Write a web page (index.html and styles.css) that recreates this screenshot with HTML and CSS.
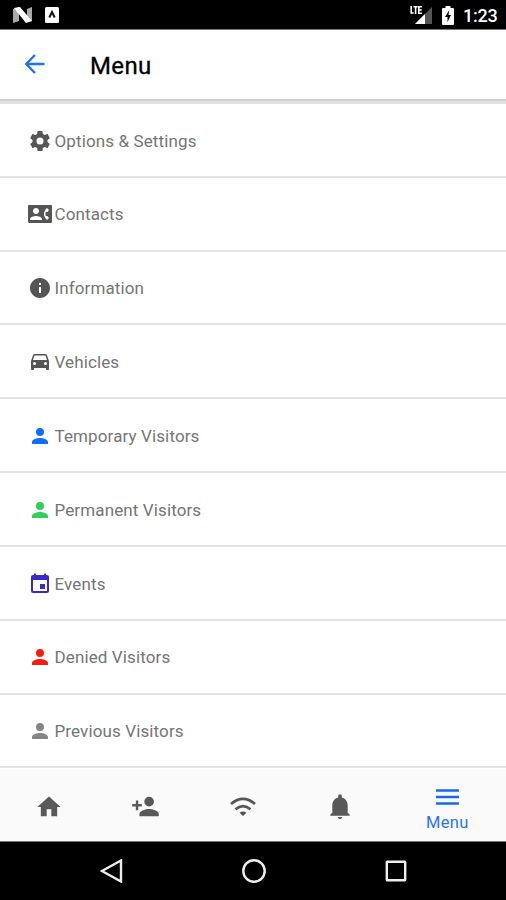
FILE: index.html
```html
<!DOCTYPE html>
<html lang="en">
<head>
<meta charset="utf-8">
<title>Menu</title>
<link rel="stylesheet" href="styles.css">
</head>
<body>
<svg class="defs" aria-hidden="true">
  <symbol id="person" viewBox="0 0 24 24"><path d="M12 12a4 4 0 1 0 0-8 4 4 0 0 0 0 8zm0 2c-2.670 0-8 1.340-8 4v2h16v-2c0-2.660-5.330-4-8-4z"/></symbol>
</svg>
<div class="status">
  <svg class="status-n" viewBox="0 0 20 16"><path fill="#aaa" d="M0 2l6-2v14l-6 2zM14 2l5-2v14l-5 1z"/><path fill="#fff" d="M1 1l6-1 12 14-6 2z"/></svg>
  <svg class="status-a" viewBox="0 0 14 16"><rect width="14" height="16" rx="1.5" fill="#fff"/><path d="M4.300 10.500L7 5l2.700 5.500" fill="none" stroke="#111" stroke-width="2"/></svg>
  <span class="spacer"></span>
  <svg class="status-signal" viewBox="0 0 23 20"><path fill="#555" d="M22 2v17H5z"/><path fill="#fff" d="M15 9v10H5z"/><path fill="none" stroke="#fff" stroke-width="1.600" d="M1.200 1v7h2.500M3.500 1.700h4.200M5.600 1.700V9M12 1.700H8.800v6.600H12M9 5h2.800"/></svg>
  <svg class="status-battery" viewBox="0 0 12 19"><path fill="#fff" d="M3.500 0h5v2H11a1 1 0 0 1 1 1v15a1 1 0 0 1-1 1H1a1 1 0 0 1-1-1V3a1 1 0 0 1 1-1h2.500z"/><path d="M7.300 4L3 11h2.500v5L9 9H6.500z"/></svg>
  <span class="clock">1:23</span>
</div>
<header class="header">
  <svg class="back" viewBox="0 0 20 20"><path d="M19.500 10H1.500M10 1L1.200 10l8.800 9"/></svg>
  <h1>Menu</h1>
</header>
<ul class="list">
  <li><svg class="icon" viewBox="0 0 24 24"><path d="M19.430 12.980c.04-.32.07-.64.07-.98s-.03-.66-.07-.98l2.110-1.650c.19-.15.24-.42.12-.64l-2-3.460c-.12-.22-.39-.3-.61-.22l-2.490 1c-.52-.4-1.080-.73-1.690-.98l-.38-2.650A.488.488 0 0 0 14 2h-4c-.25 0-.46.18-.49.42l-.38 2.650c-.61.25-1.170.59-1.690.98l-2.490-1c-.23-.09-.49 0-.61.22l-2 3.460c-.13.22-.07.49.12.64l2.110 1.650c-.04.32-.07.65-.07.98s.03.66.07.98l-2.110 1.650c-.19.15-.24.42-.12.64l2 3.460c.12.22.39.3.61.22l2.490-1c.52.4 1.080.73 1.690.98l.38 2.650c.03.24.24.42.49.42h4c.25 0 .46-.18.49-.42l.38-2.650c.61-.25 1.170-.59 1.690-.98l2.490 1c.23.09.49 0 .61-.22l2-3.460c.12-.22.07-.49-.12-.64l-2.110-1.650zM12 15.500a3.500 3.500 0 1 1 0-7 3.500 3.500 0 0 1 0 7z"/></svg><span>Options &amp; Settings</span></li>
  <li><svg class="icon" viewBox="0 0 24 24"><path d="M22.800 3H1.200C.5 3 0 3.500 0 4.200v15.600c0 .7.500 1.200 1.200 1.200h21.600c.7 0 1.200-.5 1.200-1.200V4.200c0-.7-.5-1.200-1.200-1.200zM8 6c1.660 0 3 1.340 3 3s-1.340 3-3 3-3-1.340-3-3 1.340-3 3-3zm6 12H2v-1c0-2 4-3.100 6-3.100s6 1.100 6 3.100v1zm3.850-4h1.640L21 16l-1.990 1.990A7.512 7.512 0 0 1 16.280 14c-.18-.64-.28-1.310-.28-2s.1-1.360.28-2a7.474 7.474 0 0 1 2.730-3.990L21 8l-1.510 2h-1.640c-.22.63-.35 1.300-.35 2s.13 1.370.35 2z"/></svg><span>Contacts</span></li>
  <li><svg class="icon" viewBox="0 0 24 24"><path d="M12 2C6.480 2 2 6.480 2 12s4.480 10 10 10 10-4.480 10-10S17.520 2 12 2zm1 15h-2v-6h2v6zm0-8h-2V7h2v2z"/></svg><span>Information</span></li>
  <li><svg class="icon" viewBox="0 0 24 24"><path d="M18.920 5.010C18.720 4.420 18.160 4 17.500 4h-11c-.66 0-1.210.42-1.420 1.010L3 11v8c0 .55.45 1 1 1h1c.55 0 1-.45 1-1v-1h12v1c0 .55.45 1 1 1h1c.55 0 1-.45 1-1v-8l-2.080-5.990zM6.500 15a1.500 1.500 0 1 1 0-3 1.500 1.500 0 0 1 0 3zm11 0a1.500 1.500 0 1 1 0-3 1.500 1.500 0 0 1 0 3zM5 10l1.500-4.500h11L19 10H5z"/></svg><span>Vehicles</span></li>
  <li><svg class="icon blue"><use href="#person"/></svg><span>Temporary Visitors</span></li>
  <li><svg class="icon green"><use href="#person"/></svg><span>Permanent Visitors</span></li>
  <li><svg class="icon indigo" viewBox="0 0 24 24"><path d="M17 12h-5v5h5v-5zM16 1.500V3H8V1.500H6V3H5c-1.110 0-1.990.9-1.990 2L3 19a2 2 0 0 0 2 2h14c1.100 0 2-.9 2-2V5c0-1.100-.9-2-2-2h-1V1.500h-2zM19 19H5V8h14v11z"/></svg><span>Events</span></li>
  <li><svg class="icon red"><use href="#person"/></svg><span>Denied Visitors</span></li>
  <li><svg class="icon grey"><use href="#person"/></svg><span>Previous Visitors</span></li>
</ul>
<nav class="tabs">
  <div class="tab"><svg class="home" viewBox="0 0 24 24"><path d="M10 20v-6h4v6h5v-8h3L12 3 2 12h3v8z"/></svg></div>
  <div class="tab"><svg class="add" viewBox="0 0 24 24"><path d="M15 12a4 4 0 1 0 0-8 4 4 0 0 0 0 8zm-9-2V7H4v3H1v2h3v3h2v-3h3v-2H6zm9 4c-2.670 0-8 1.340-8 4v2h16v-2c0-2.660-5.330-4-8-4z"/></svg></div>
  <div class="tab"><svg class="wifi" viewBox="0 0 26 19"><path d="M1 7Q13-3.200 25 7M5.500 12.300Q13 6 20.500 12.300"/><path class="dot" d="M9.500 15.800q3.500-2.800 7 0L13 19z"/></svg></div>
  <div class="tab"><svg class="bell" viewBox="0 0 20 25"><path d="M10 25c1.300 0 2.200-.9 2.200-2.100H7.800C7.800 24.100 8.700 25 10 25zM17.700 18.700v-7.200c0-3.900-2.300-7-5.900-7.900V2a1.800 1.800 0 0 0-3.600 0v1.600c-3.600.9-5.900 4-5.900 7.900v7.200L.3 20.500v1.300h19.400v-1.300z"/></svg></div>
  <div class="tab active"><svg class="burger" viewBox="0 0 23 16"><path d="M0 1.500h23M0 8h23M0 14.500h23"/></svg><span>Menu</span></div>
</nav>
<div class="system">
  <svg viewBox="0 0 24 24"><path d="M21 1.500v21L2 12z"/></svg>
  <svg viewBox="0 0 24 24"><circle cx="12" cy="12" r="10.700"/></svg>
  <svg viewBox="0 0 24 24"><rect x="2.800" y="2.800" width="18.400" height="18.400" rx=".5"/></svg>
</div>
</body>
</html>
```
FILE: styles.css
```css
* { box-sizing: border-box; }
body {
  margin: 0;
  width: 506px;
  height: 900px;
  display: flex;
  flex-direction: column;
  overflow: hidden;
  background: #fff;
  font-family: Roboto, sans-serif;
}
svg { display: block; flex: none; }
.defs { display: none; }

.status {
  height: 30px;
  flex: none;
  display: flex;
  align-items: center;
  padding: 1px 9px 0 13px;
  background: #000;
  border-bottom: 1px solid #777;
}
.status-n { width: 20px; height: 16px; }
.status-a { width: 14px; height: 16px; margin-left: 12px; }
.spacer { flex: 1; }
.status-signal { width: 23px; height: 20px; margin-top: -1px; }
.status-battery { width: 12px; height: 19px; margin: 0 9px 0 9px; }
.clock {
  width: 34px;
  padding-top: 1px;
  color: #fff;
  font-size: 18px;
  font-weight: 500;
  line-height: 20px;
  letter-spacing: -.2px;
  white-space: nowrap;
}

.header {
  height: 74px;
  flex: none;
  display: flex;
  align-items: center;
  padding: 0 25px 3px;
  border-bottom: 3px solid #e2e2e2;
  box-shadow: inset 0 -2px #d0d0d0;
}
.back {
  width: 20px;
  height: 20px;
  fill: none;
  stroke: #1a73f5;
  stroke-width: 2.300;
}
h1 {
  margin: 3px 0 0 45px;
  font-size: 24px;
  font-weight: 400;
  line-height: 30px;
  letter-spacing: .35px;
  -webkit-text-stroke: .3px #000;
}

.list {
  height: 664.500px;
  flex: none;
  display: flex;
  flex-direction: column;
  margin: 0;
  padding: 0;
  list-style: none;
}
.list li {
  flex: 1;
  display: flex;
  align-items: center;
  padding: 1.500px 0 0 27.500px;
  border-bottom: 2px solid #e4e4e4;
  color: #757575;
  font-size: 17px;
  letter-spacing: .12px;
}
.icon { width: 24px; height: 24px; margin-right: 3px; fill: #555; }
.icon.blue { fill: #0d6efd; }
.icon.green { fill: #2fd158; }
.icon.indigo { fill: #3a2bc8; }
.icon.red { fill: #fb1b12; }
.icon.grey { fill: #868686; }

.tabs {
  flex: 1;
  display: grid;
  grid-template-columns: repeat(4, 97.200px) 1fr;
  background: #fafafa;
  border-bottom: 1px solid #777;
}
.tab {
  display: flex;
  flex-direction: column;
  align-items: center;
  justify-content: center;
  padding-top: 4px;
  fill: #595959;
}
.home { width: 28px; height: 28px; }
.add { width: 29px; height: 29px; }
.wifi { width: 26px; height: 19px; fill: none; stroke: #555; stroke-width: 2.800; }
.wifi .dot { fill: #555; stroke: none; }
.bell { width: 20px; height: 25px; }
.burger { width: 23px; height: 16px; stroke: #1769f0; stroke-width: 2.300; }
.active { padding-top: 13px; }
.active span {
  margin-top: 8px;
  color: #2a74ef;
  font-size: 16.500px;
  line-height: 20px;
  letter-spacing: .3px;
}

.system {
  height: 58px;
  flex: none;
  display: flex;
  justify-content: center;
  align-items: center;
  gap: 118px;
  padding-left: 2px;
  background: #000;
}
.system svg {
  width: 24px;
  height: 24px;
  fill: none;
  stroke: #eee;
  stroke-width: 2.400;
}
```
